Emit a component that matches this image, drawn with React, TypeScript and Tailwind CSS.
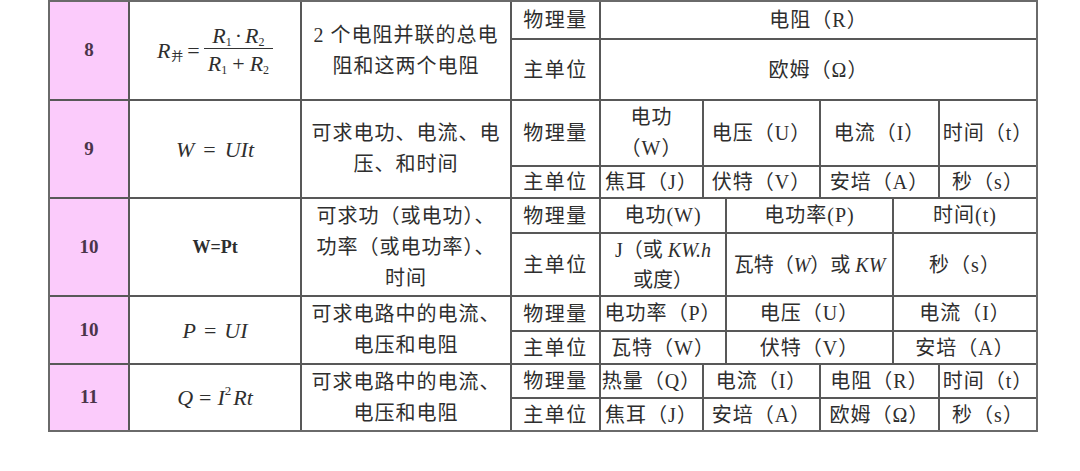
import React from 'react';

type Node = React.ReactNode;

function Cell({ children, className = '' }: { children?: Node; className?: string }) {
  return (
    <div className={`flex items-center justify-center bg-white text-center whitespace-nowrap ${className}`}>
      {children}
    </div>
  );
}

function NumCell({ n }: { n: string }) {
  return (
    <div className="flex items-center justify-center bg-[#fbcbfb] text-[19px] font-bold text-[#4a3449]">{n}</div>
  );
}

// label column + per-row quantity cells, two sub rows
function Quantities({ grid, top, bottom }: { grid: string; top: Node[]; bottom: Node[] }) {
  return (
    <div className={`grid gap-[2px] bg-[#585858] ${grid}`}>
      <Cell className="tracking-[1.5px]">物理量</Cell>
      {top.map((t, i) => (
        <Cell key={`t${i}`} className="tracking-[1px] leading-[31px]">
          {t}
        </Cell>
      ))}
      <Cell className="tracking-[1.5px]">主单位</Cell>
      {bottom.map((t, i) => (
        <Cell key={`b${i}`} className="tracking-[1px] leading-[30px]">
          {t}
        </Cell>
      ))}
    </div>
  );
}

function Desc({ lines }: { lines: string[] }) {
  return (
    <Cell className="tracking-[1px] leading-[31px]">
      <div>
        {lines.map((l) => (
          <div key={l}>{l}</div>
        ))}
      </div>
    </Cell>
  );
}

function ParallelFormula() {
  return (
    <div className="flex items-center text-[22px] italic">
      <span>R</span>
      <span className="not-italic text-[12px] mt-[12px] ml-[1px]">并</span>
      <span className="not-italic mx-[4px]">=</span>
      <span className="inline-flex flex-col items-center">
        <span className="px-[6px] leading-[25px]">
          R<sub className="not-italic text-[12px]">1</sub>
          <span className="not-italic mx-[3px]">·</span>R<sub className="not-italic text-[12px]">2</sub>
        </span>
        <span className="block h-[1px] w-full bg-[#333]" />
        <span className="px-[4px] leading-[29px]">
          R<sub className="not-italic text-[12px]">1</sub>
          <span className="not-italic mx-[5px]">+</span>R<sub className="not-italic text-[12px]">2</sub>
        </span>
      </span>
    </div>
  );
}

export default function App() {
  return (
    <div className="h-[471px] w-[1080px] bg-white font-['Liberation_Serif','Noto_Sans_CJK_SC',serif] text-[20px] text-[#2e2e2e]">
      <div className="ml-[48px] grid w-[990px] grid-cols-[78px_170px_208px_524px] grid-rows-[97px_96px_96px_66px_65px] gap-[2px] border-2 border-[#6a6a6a] bg-[#585858]">
        {/* 8 */}
        <NumCell n="8" />
        <Cell>
          <ParallelFormula />
        </Cell>
        <Desc lines={['2 个电阻并联的总电', '阻和这两个电阻']} />
        <Quantities
          grid="grid-cols-[87px_435px] grid-rows-[36px_59px]"
          top={['电阻（R）']}
          bottom={['欧姆（Ω）']}
        />

        {/* 9 */}
        <NumCell n="9" />
        <Cell className="italic text-[22px]">
          W<span className="not-italic mx-[9px]">=</span>UIt
        </Cell>
        <Desc lines={['可求电功、电流、电', '压、和时间']} />
        <Quantities
          grid="grid-cols-[87px_101px_115px_117px_96px] grid-rows-[64px_30px]"
          top={[
            <div key="w">
              <div>电功</div>
              <div>（W）</div>
            </div>,
            '电压（U）',
            '电流（I）',
            '时间（t）',
          ]}
          bottom={['焦耳（J）', '伏特（V）', '安培（A）', '秒（s）']}
        />

        {/* 10 */}
        <NumCell n="10" />
        <Cell className="text-[18px] font-bold">W=Pt</Cell>
        <Desc lines={['可求功（或电功）、', '功率（或电功率）、', '时间']} />
        <Quantities
          grid="grid-cols-[87px_124px_165px_142px] grid-rows-[33px_61px]"
          top={['电功(W)', '电功率(P)', '时间(t)']}
          bottom={[
            <div key="j" className="tracking-[0px]">
              <div>
                J（或 <span className="italic">KW.h</span>
              </div>
              <div>或度）</div>
            </div>,
            <span key="wa" className="tracking-[0px]">
              瓦特（<span className="italic">W</span>）或 <span className="italic">KW</span>
            </span>,
            '秒（s）',
          ]}
        />

        {/* 10 */}
        <NumCell n="10" />
        <Cell className="italic text-[22px]">
          P<span className="not-italic mx-[8px]">=</span>UI
        </Cell>
        <Desc lines={['可求电路中的电流、', '电压和电阻']} />
        <Quantities
          grid="grid-cols-[87px_124px_165px_142px] grid-rows-[33px_31px]"
          top={['电功率（P）', '电压（U）', '电流（I）']}
          bottom={['瓦特（W）', '伏特（V）', '安培（A）']}
        />

        {/* 11 */}
        <NumCell n="11" />
        <Cell className="italic text-[22px]">
          Q<span className="not-italic mx-[6px]">=</span>I
          <sup className="not-italic text-[13px] mr-[2px]">2</sup>Rt
        </Cell>
        <Desc lines={['可求电路中的电流、', '电压和电阻']} />
        <Quantities
          grid="grid-cols-[87px_101px_115px_117px_96px] grid-rows-[32px_31px]"
          top={['热量（Q）', '电流（I）', '电阻（R）', '时间（t）']}
          bottom={['焦耳（J）', '安培（A）', '欧姆（Ω）', '秒（s）']}
        />
      </div>
    </div>
  );
}
